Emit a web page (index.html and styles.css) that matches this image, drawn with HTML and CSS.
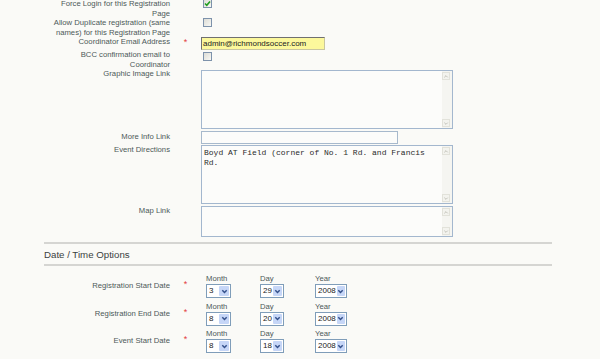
FILE: index.html
```html
<!DOCTYPE html>
<html>
<head>
<meta charset="utf-8">
<link rel="stylesheet" href="styles.css">
</head>
<body>
<div class="page">
  <div class="form">
    <div class="lbl">Force Login for this Registration<br>Page</div>
    <div class="req"></div>
    <div class="fld"><span class="cb"><svg viewBox="0 0 7 7" width="7" height="7"><path d="M1 3.5 L2.8 5.3 L6 1.5" fill="none" stroke="#1f9d1f" stroke-width="1.6"/></svg></span></div>

    <div class="lbl">Allow Duplicate registration (same<br>names) for this Registration Page</div>
    <div class="req"></div>
    <div class="fld"><span class="cb"></span></div>

    <div class="lbl">Coordinator Email Address</div>
    <div class="req">*</div>
    <div class="fld"><div class="text email">admin@richmondsoccer.com</div></div>

    <div class="lbl">BCC confirmation email to<br>Coordinator</div>
    <div class="req"></div>
    <div class="fld"><span class="cb cb-low"></span></div>

    <div class="lbl">Graphic Image Link</div>
    <div class="req"></div>
    <div class="fld"><div class="area tall"><div class="area-text"></div><div class="sb"><span class="sbb"><svg viewBox="0 0 7 7" width="7" height="7"><path d="M1.5 4.5 L3.5 2.5 L5.5 4.5" fill="none" stroke="#b8b8b0" stroke-width="1"/></svg></span><span class="sbb"><svg viewBox="0 0 7 7" width="7" height="7"><path d="M1.5 2.5 L3.5 4.5 L5.5 2.5" fill="none" stroke="#b8b8b0" stroke-width="1"/></svg></span></div></div></div>

    <div class="lbl lbl-pad">More Info Link</div>
    <div class="req"></div>
    <div class="fld"><div class="text info"></div></div>

    <div class="lbl lbl-dir">Event Directions</div>
    <div class="req"></div>
    <div class="fld"><div class="area tall"><div class="area-text mono">Boyd AT Field (corner of No. 1 Rd. and Francis Rd.</div><div class="sb"><span class="sbb"><svg viewBox="0 0 7 7" width="7" height="7"><path d="M1.5 4.5 L3.5 2.5 L5.5 4.5" fill="none" stroke="#b8b8b0" stroke-width="1"/></svg></span><span class="sbb"><svg viewBox="0 0 7 7" width="7" height="7"><path d="M1.5 2.5 L3.5 4.5 L5.5 2.5" fill="none" stroke="#b8b8b0" stroke-width="1"/></svg></span></div></div></div>

    <div class="lbl lbl-map">Map Link</div>
    <div class="req"></div>
    <div class="fld"><div class="area short gap2"><div class="area-text"></div><div class="sb"><span class="sbb"><svg viewBox="0 0 7 7" width="7" height="7"><path d="M1.5 4.5 L3.5 2.5 L5.5 4.5" fill="none" stroke="#b8b8b0" stroke-width="1"/></svg></span><span class="sbb"><svg viewBox="0 0 7 7" width="7" height="7"><path d="M1.5 2.5 L3.5 4.5 L5.5 2.5" fill="none" stroke="#b8b8b0" stroke-width="1"/></svg></span></div></div></div>
  </div>

  <div class="section-head">Date / Time Options</div>

  <div class="form dates">
    <div class="lbl dlbl">Registration Start Date</div>
    <div class="req dreq">*</div>
    <div class="fld dgroups">
      <div class="dg dg-m"><div class="dcap">Month</div><div class="sel s-m"><span class="val">3</span><span class="arr"><svg viewBox="0 0 7 7" width="7" height="7"><path d="M1.3 2.3 L3.5 4.5 L5.7 2.3" fill="none" stroke="#34508a" stroke-width="1.5"/></svg></span></div></div>
      <div class="dg dg-d"><div class="dcap">Day</div><div class="sel s-d"><span class="val">29</span><span class="arr"><svg viewBox="0 0 7 7" width="7" height="7"><path d="M1.3 2.3 L3.5 4.5 L5.7 2.3" fill="none" stroke="#34508a" stroke-width="1.5"/></svg></span></div></div>
      <div class="dg"><div class="dcap">Year</div><div class="sel s-y"><span class="val">2008</span><span class="arr"><svg viewBox="0 0 7 7" width="7" height="7"><path d="M1.3 2.3 L3.5 4.5 L5.7 2.3" fill="none" stroke="#34508a" stroke-width="1.5"/></svg></span></div></div>
    </div>

    <div class="lbl dlbl">Registration End Date</div>
    <div class="req dreq">*</div>
    <div class="fld dgroups">
      <div class="dg dg-m"><div class="dcap">Month</div><div class="sel s-m"><span class="val">8</span><span class="arr"><svg viewBox="0 0 7 7" width="7" height="7"><path d="M1.3 2.3 L3.5 4.5 L5.7 2.3" fill="none" stroke="#34508a" stroke-width="1.5"/></svg></span></div></div>
      <div class="dg dg-d"><div class="dcap">Day</div><div class="sel s-d"><span class="val">20</span><span class="arr"><svg viewBox="0 0 7 7" width="7" height="7"><path d="M1.3 2.3 L3.5 4.5 L5.7 2.3" fill="none" stroke="#34508a" stroke-width="1.5"/></svg></span></div></div>
      <div class="dg"><div class="dcap">Year</div><div class="sel s-y"><span class="val">2008</span><span class="arr"><svg viewBox="0 0 7 7" width="7" height="7"><path d="M1.3 2.3 L3.5 4.5 L5.7 2.3" fill="none" stroke="#34508a" stroke-width="1.5"/></svg></span></div></div>
    </div>

    <div class="lbl dlbl">Event Start Date</div>
    <div class="req dreq">*</div>
    <div class="fld dgroups">
      <div class="dg dg-m"><div class="dcap">Month</div><div class="sel s-m"><span class="val">8</span><span class="arr"><svg viewBox="0 0 7 7" width="7" height="7"><path d="M1.3 2.3 L3.5 4.5 L5.7 2.3" fill="none" stroke="#34508a" stroke-width="1.5"/></svg></span></div></div>
      <div class="dg dg-d"><div class="dcap">Day</div><div class="sel s-d"><span class="val">18</span><span class="arr"><svg viewBox="0 0 7 7" width="7" height="7"><path d="M1.3 2.3 L3.5 4.5 L5.7 2.3" fill="none" stroke="#34508a" stroke-width="1.5"/></svg></span></div></div>
      <div class="dg"><div class="dcap">Year</div><div class="sel s-y"><span class="val">2008</span><span class="arr"><svg viewBox="0 0 7 7" width="7" height="7"><path d="M1.3 2.3 L3.5 4.5 L5.7 2.3" fill="none" stroke="#34508a" stroke-width="1.5"/></svg></span></div></div>
    </div>
  </div>
</div>
</body>
</html>
```

FILE: styles.css
```css
html, body {
  margin: 0;
  padding: 0;
  background: #fafaf7;
}
body {
  width: 600px;
  height: 359px;
  overflow: hidden;
  font-family: "Liberation Sans", Arial, sans-serif;
  color: #4c5958;
}
.page {
  margin-top: -1px;
}
.form {
  display: grid;
  grid-template-columns: 120px 31px 1fr;
  padding-left: 50px;
  align-items: start;
}
.lbl {
  font-size: 7.7px;
  line-height: 9.5px;
  text-align: right;
  white-space: nowrap;
}
.lbl-pad { padding-top: 3px; }
.lbl-dir { padding-top: 1px; }
.lbl-map { padding-top: 2px; }
.req {
  color: #e23b3b;
  font-size: 9px;
  line-height: 9px;
  text-align: center;
  padding-top: 1px;
}
.fld {
  display: flex;
  align-items: flex-start;
}
.cb {
  width: 7px;
  height: 7px;
  margin-left: 2px;
  border: 1px solid #7d92ab;
  background: linear-gradient(135deg, #dcdcd6, #f8f8f4);
  display: flex;
  align-items: center;
  justify-content: center;
}
.cb-low { margin-top: 2px; }
.text {
  height: 11px;
  box-sizing: content-box;
  font-size: 8px;
  line-height: 11px;
  padding: 0 1px;
  color: #222;
}
.email {
  width: 120px;
  background: #fcf89c;
  border: 1px solid #c9c6a0;
  border-top-color: #707070;
  border-left-color: #707070;
}
.info {
  width: 193px;
  margin-top: 2px;
  background: #fcfcfa;
  border: 1px solid #a7b9cc;
}
.area {
  width: 250px;
  margin-top: 1px;
  border: 1px solid #a3b7ce;
  background: #fcfcfa;
  display: flex;
}
.area.gap2 { margin-top: 2px; }
.tall { height: 57px; }
.short { height: 29px; }
.area-text {
  flex: 1;
  padding: 2px 2px 0 2px;
}
.mono {
  font-family: "Liberation Mono", "Courier New", monospace;
  font-size: 8px;
  line-height: 10px;
  color: #2a2a2a;
}
.sb {
  width: 9px;
  background: #f5f5f1;
  display: flex;
  flex-direction: column;
  justify-content: space-between;
  padding: 1px 1px 1px 0;
}
.sbb {
  width: 8px;
  height: 8px;
  box-sizing: border-box;
  border: 1px solid #e2e2da;
  background: #f3f3ee;
  display: flex;
  align-items: center;
  justify-content: center;
}
.section-head {
  margin: 5px 48px 0 44px;
  border-top: 2px solid #d5d5d2;
  border-bottom: 2px solid #d5d5d2;
  padding: 5px 0 3px 0;
  font-size: 9.7px;
  line-height: 12px;
  color: #3b3f3f;
}
.dates {
  margin-top: 8px;
  row-gap: 3.5px;
}
.dlbl { padding-top: 7px; }
.dreq { padding-top: 6px; }
.dgroups { padding-left: 5px; }
.dg { display: flex; flex-direction: column; }
.dg-m { width: 54px; }
.dg-d { width: 55px; }
.dcap {
  font-size: 7.7px;
  line-height: 9px;
  height: 9px;
}
.sel {
  margin-top: 1px;
  height: 14px;
  box-sizing: border-box;
  border: 1px solid #7f9db9;
  background: #fff;
  display: flex;
  align-items: stretch;
}
.s-m { width: 25px; }
.s-d { width: 24px; }
.s-y { width: 32px; }
.val {
  flex: 1;
  font-size: 8px;
  line-height: 12px;
  padding-left: 2px;
  color: #222;
}
.arr {
  width: 10px;
  margin: 1px;
  background: #c6d6f7;
  border-radius: 1px;
  display: flex;
  align-items: center;
  justify-content: center;
}
```
